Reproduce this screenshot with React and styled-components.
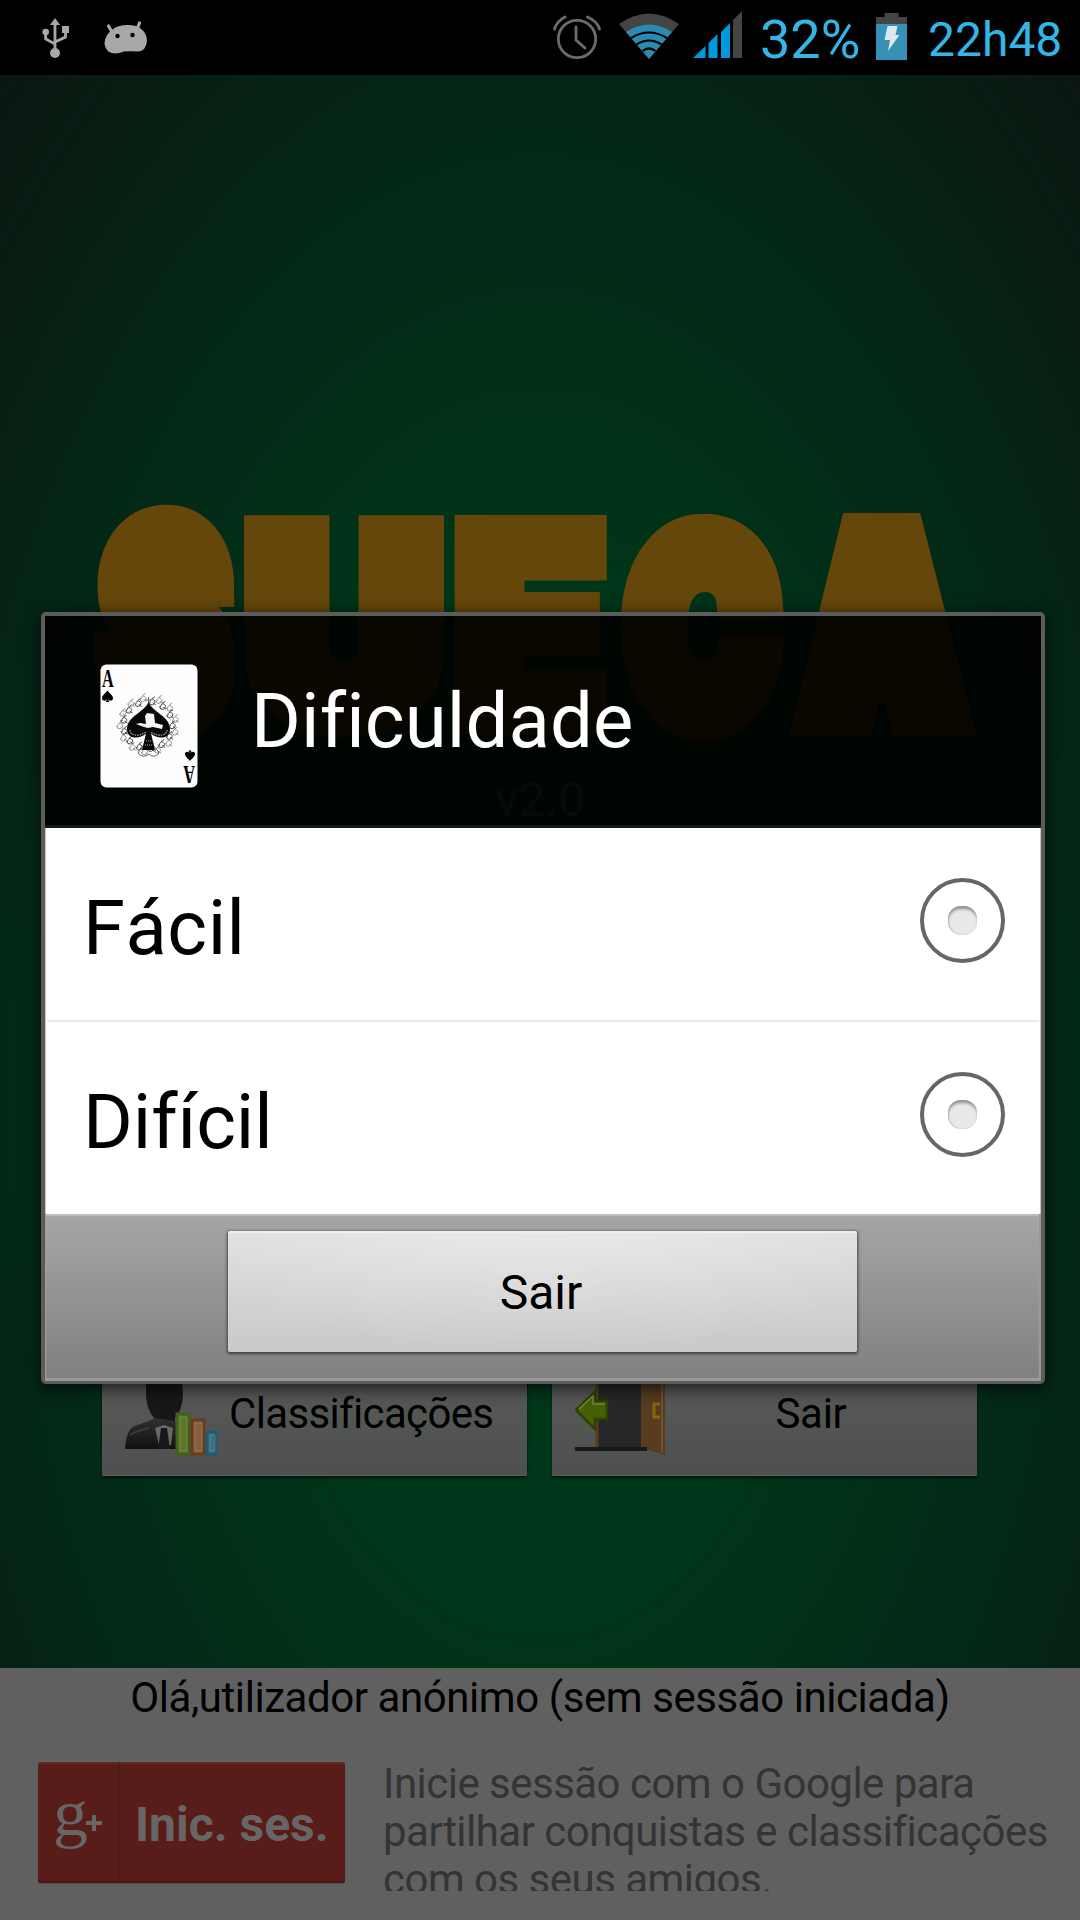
import React from "react";
import styled, { createGlobalStyle } from "styled-components";

const GlobalStyle = createGlobalStyle`
  * { box-sizing: border-box; }
  body { margin: 0; background: #000; font-family: Roboto, "Liberation Sans", sans-serif; }
`;

const Screen = styled.div`
  position: relative;
  width: 1080px;
  height: 1920px;
  display: flex;
  flex-direction: column;
  overflow: hidden;
`;

const StatusBar = styled.header`
  height: 75px;
  flex: none;
  display: flex;
  justify-content: space-between;
  background: #000;
  padding: 0 19px 0 42px;
`;

const StatusGroup = styled.div`
  display: flex;
  align-items: flex-start;
`;

const StatusIcon = styled.svg`
  display: block;
  flex: none;
  margin-left: ${(p) => p.$gap || 0}px;
`;

const StatusText = styled.span`
  width: ${(p) => p.$width}px;
  margin-left: ${(p) => p.$gap}px;
  font-size: ${(p) => p.$size}px;
  line-height: 76px;
  padding-top: ${(p) => p.$drop || 0}px;
  white-space: nowrap;
  color: #33b5e5;
`;

const Table = styled.main`
  height: 1593px;
  flex: none;
  display: flex;
  flex-direction: column;
  align-items: center;
  background: radial-gradient(ellipse 790px 1400px at 540px 1020px, #003a1b 0%, #003619 35%, #042616 72%, #0b1610 100%);
`;

const Logo = styled.svg`
  display: block;
  flex: none;
  margin-top: 405px;
  overflow: visible;
`;

const Version = styled.div`
  height: 60px;
  margin-top: 20px;
  font-size: 48px;
  line-height: 60px;
  color: #5a5a5a;
`;

const Menu = styled.nav`
  width: 876px;
  margin-top: 526px;
  display: grid;
  grid-template-columns: 425px 425px;
  gap: 25px;
`;

const MenuButton = styled.button`
  height: 120px;
  display: flex;
  align-items: center;
  padding: 0 0 9px 23px;
  border: 0;
  border-radius: 2px;
  background: linear-gradient(#5a5c5a, #4e504f);
  box-shadow: 0 2px 3px rgba(0, 0, 0, 0.6), inset 0 -1px 0 #5c5e5d;
  font-family: inherit;
  font-size: 42px;
  line-height: 50px;
  color: #000;
`;

const MenuLabel = styled.span`
  flex: 1;
  padding: 5px ${(p) => p.$right || 0}px 0 ${(p) => p.$left || 0}px;
  text-align: ${(p) => p.$align};
  letter-spacing: ${(p) => p.$track || 0}px;
`;

const Footer = styled.footer`
  flex: 1;
  background: #606060;
`;

const Greeting = styled.div`
  height: 60px;
  line-height: 60px;
  text-align: center;
  font-size: 42px;
  letter-spacing: ${(p) => p.$track}px;
  color: #000;
`;

const SignIn = styled.div`
  display: flex;
  padding: 34px 0 0 38px;
`;

const GoogleButton = styled.button`
  width: 307px;
  height: 121px;
  flex: none;
  display: flex;
  padding: 0;
  border: 0;
  border-radius: 3px;
  background: #581d18;
  box-shadow: inset 0 2px 0 #632a25, inset 0 -2px 0 #4a1814, 0 1px 1px #505050;
  color: #666;
`;

const GoogleMark = styled.span`
  width: 81px;
  border-right: 1px solid #45150f;
`;

const GoogleLabel = styled.span`
  flex: 1;
  padding-left: 16px;
  text-align: left;
  font: bold 48px/125px Roboto, sans-serif;
  white-space: nowrap;
`;

const Pitch = styled.p`
  height: 131px;
  margin: -2px 0 0 38px;
  overflow: hidden;
  font-size: 42px;
  line-height: 48px;
  letter-spacing: ${(p) => p.$track}px;
  white-space: nowrap;
  color: #343434;
`;

const Dialog = styled.section`
  position: absolute;
  left: 41px;
  top: 612px;
  width: 1004px;
  height: 772px;
  display: flex;
  flex-direction: column;
  border: 4px solid #5c5c5c;
  border-width: 4px 4px 3px;
  border-radius: 5px;
  box-shadow: 0 4px 18px rgba(0, 0, 0, 0.75);
`;

const DialogHeader = styled.div`
  height: 212px;
  flex: none;
  display: flex;
  align-items: center;
  padding: 10px 0 0 55px;
  background: rgba(0, 0, 0, 0.9);
  border-bottom: 3px solid #181818;
`;

const Title = styled.h1`
  margin: -10px 0 0 53px;
  font-weight: 400;
  font-size: 76px;
  line-height: 90px;
  letter-spacing: ${(p) => p.$track}px;
  color: #fff;
`;

const Options = styled.div`
  height: 386px;
  flex: none;
  display: flex;
  flex-direction: column;
  background: #fff;
  border: solid #c8c8c8;
  border-width: 0 1px;
`;

const Option = styled.label`
  flex: 1;
  display: flex;
  align-items: center;
  justify-content: space-between;
  padding: 0 35px 0 37px;
`;

const OptionText = styled.span`
  padding-top: 7px;
  font-size: 76px;
  font-kerning: none;
  line-height: 90px;
  letter-spacing: ${(p) => p.$track}px;
  color: #000;
`;

const Divider = styled.hr`
  height: 2px;
  width: 992px;
  margin: 0 0 0 1px;
  border: 0;
  background: #e9e9e9;
`;

const Radio = styled.span`
  width: 85px;
  height: 85px;
  margin-bottom: 8px;
  display: grid;
  place-items: center;
  border: 4px solid #666;
  border-radius: 50%;
`;

const RadioDot = styled.span`
  width: 29px;
  height: 29px;
  border-radius: 13px;
  background: #e9e9e9;
  box-shadow: inset 0 4px 3px -1px #929292, inset 1px 0 2px #bbb;
`;

const Actions = styled.div`
  flex: 1;
  display: flex;
  justify-content: center;
  align-items: flex-start;
  padding: 17px 1px 0 0;
  background: linear-gradient(#a6a6a6, #808080);
  border: solid #999;
  border-width: 0 2px 3px 1px;
  box-shadow: inset 0 2px 1px #bdbdbd;
`;

const ActionButton = styled.button`
  width: 629px;
  height: 121px;
  padding: 3px 2px 0 0;
  border: 0;
  border-radius: 2px;
  background: radial-gradient(ellipse 60% 100% at 50% 0, rgba(255,255,255,0.3), rgba(255,255,255,0)), linear-gradient(#e0e0e0, #c9c9c9);
  box-shadow: inset 0 2px 1px #f0f0f0, 0 1px 3px 1px rgba(40, 40, 40, 0.75);
  font: 48px/58px Roboto, sans-serif;
  color: #000;
`;

function UsbIcon() {
  return (
    <StatusIcon width="28" height="75" viewBox="0 0 28 75" fill="#a8a8a8">
      <path d="M13 18 18 25H8Z" />
      <circle cx="13" cy="53" r="5" />
      <circle cx="3.7" cy="32" r="3.3" />
      <path d="M20 26h7v7h-7z" />
      <path d="M13 24v28M3.7 33v6L13 44M23.5 31v6L13 42" fill="none" stroke="#a8a8a8" strokeWidth="2.8" />
    </StatusIcon>
  );
}

function DroidIcon() {
  return (
    <StatusIcon $gap={34} width="44" height="75" viewBox="0 0 44 75" fill="#a8a8a8">
      <path d="M4.500 26 8 32M35.500 23 33.500 28" stroke="#a8a8a8" strokeWidth="3.200" strokeLinecap="round" />
      <path d="M8 30Q13 25 24 25Q32 25 36 28Q43 33 43 41Q42 51 34 51.500Q27 51 20 51.500Q11 55 5 52Q1 49 0.500 43Q1 35 8 30Z" />
      <circle cx="13.500" cy="36" r="2.200" fill="#000" />
      <circle cx="28.500" cy="35" r="2.200" fill="#000" />
    </StatusIcon>
  );
}

function AlarmIcon() {
  return (
    <StatusIcon width="50" height="75" viewBox="0 0 50 75" fill="none" stroke="#6b6b6b" strokeWidth="2.800" strokeLinecap="round">
      <circle cx="24" cy="39" r="18.700" />
      <path d="M23 27v13l9 8" />
      <path d="M1.500 29Q4 21 12 17M46.500 29Q44 21 34.500 17" />
    </StatusIcon>
  );
}

function WifiIcon() {
  return (
    <StatusIcon $gap={16} width="60" height="75" viewBox="0 0 60 75">
      <path d="M30 59 0 24Q30 3 60 24Z" fill="#444" />
      <path d="M30 59 7 32Q30 17 53 32Z" fill="#2a8ab0" />
      <path d="M12 38Q30 27 48 38M17.500 44.500Q30 36.500 42.500 44.500M23.500 51Q30 46 36.500 51" fill="none" stroke="#000" strokeWidth="2.200" />
    </StatusIcon>
  );
}

function SignalIcon() {
  return (
    <StatusIcon $gap={14} width="49" height="75" viewBox="0 0 49 75" fill="#0099e0">
      <path d="M0 58 12.500 46V58ZM15.500 58V43L24.500 34V58ZM28 58V32L37 23V58Z" />
      <path d="M40 58V20L49 11V58Z" fill="#444" />
    </StatusIcon>
  );
}

function BatteryIcon() {
  return (
    <StatusIcon $gap={13} width="31" height="75" viewBox="0 0 31 75">
      <path d="M8.500 13h14v4H31v7H0v-7h8.500z" fill="#444" />
      <path d="M0 24h31v36H0z" fill="#3790b5" />
      <path d="M11.500 26h10l-2 9h4L12 51l2-11H8.500z" fill="#dbe9ef" />
    </StatusIcon>
  );
}

function Spade({ x, y, s, flip }) {
  return (
    <path
      transform={`translate(${x} ${y}) scale(${s} ${flip ? -s : s})`}
      d="M0-10C2-6 10-2 10 4C10 9 4 10 1 6L3 11H-3L-1 6C-4 10-10 9-10 4C-10-2-2-6 0-10Z"
    />
  );
}

function AceCard() {
  const curls = Array.from({ length: 26 }, (_, i) => {
    const a = ((-80 + (i * 340) / 25) * Math.PI) / 180;
    const r = i % 2 ? 28 : 24.5;
    return [48.5 + Math.cos(a) * r, 61 + Math.sin(a) * r * 0.96];
  });
  return (
    <svg width="98" height="124" viewBox="0 0 98 124">
      <rect x="0.500" y="0.500" width="97" height="123" rx="6" fill="#fdfdfd" />
      <g fontFamily="Liberation Serif, serif" fontWeight="bold" fontSize="26">
        <text transform="translate(2 23) scale(.62 1)">A</text>
        <text transform="translate(95 102) rotate(180) scale(.62 1)">A</text>
      </g>
      <Spade x={7.500} y={32} s={0.550} />
      <Spade x={90} y={92} s={0.500} flip />
      <g fill="none" strokeWidth="0.900">
        {curls.map(([x, y], i) => (
          <path key={i} d={`M${x - 3} ${y + 1}q1-5 4-3t-1 5q-3 1-4-3m3-3l3-2m-2 6l3 2`} stroke={i % 2 ? "#888" : "#333"} />
        ))}
        <path d="M38 89q4-9 10-9t11 9q-5 6-10 1q-6 5-11-1M48.500 33v10M46 36h5" stroke="#555" />
      </g>
      <path d="M48.500 38C52 48 70 52 70 65C70 76 57 75 51 69.500L55 86H42L46 69.500C40 75 27 76 27 65C27 52 45 48 48.500 38Z" fill="#080808" />
      <path d="M30 66c0 6 9 7 16 2M67 66c0 6-9 7-16 2" fill="none" stroke="#aaa" strokeWidth="1.200" strokeDasharray="1.500 1" />
      <path d="M45 52l2 -3 7 1 1 9 8 2-1 4-9-2-5 1-4-1-8-3 4-1 6 1z" fill="#f4f4f4" />
      <path d="M45 81h7M46 77h5" stroke="#aaa" strokeDasharray="1 1" />
    </svg>
  );
}

function RankingIcon() {
  return (
    <svg width="94" height="92" viewBox="0 0 94 92">
      <defs>
        <linearGradient id="suit" x2="0" y2="1">
          <stop offset="0" stopColor="#303030" />
          <stop offset="1" stopColor="#111" />
        </linearGradient>
      </defs>
      <path d="M21 8Q39-8 57 8L58 30Q57 44 50 52V66H29V52Q22 44 21 30Z" fill="#171717" />
      <path d="M0 83Q1 63 10 60L31 52L49 55L62 62V83Z" fill="url(#suit)" />
      <path d="M5 69Q11 65 24 62" stroke="#3b3b3b" strokeWidth="2" fill="none" />
      <path d="M30 62 39 59 48 62 46 79H34Z" fill="#686868" />
      <path d="M36 62h6l3 21H33z" fill="#181818" />
      <g strokeWidth="3">
        <path d="M52 48h12v40H52z" fill="#5a7826" stroke="#44611b" />
        <path d="M67 54h12v34H67z" fill="#8a5e38" stroke="#673d1a" />
        <path d="M82 66h9v22h-9z" fill="#397086" stroke="#245970" />
      </g>
      <path d="M55 51h7v34h-7zM70 57h7v28h-7zM85 69h5v16h-5z" fill="none" stroke="#aaa" strokeOpacity=".3" />
    </svg>
  );
}

function ExitIcon() {
  return (
    <svg width="92" height="92" viewBox="0 0 92 92">
      <path d="M22 0h44v83H22z" fill="#262728" />
      <path d="M22 0v83" stroke="#5c3c20" strokeWidth="3" />
      <path d="M66 0h24v89L66 82z" fill="#573c20" />
      <path d="M87 0v87" stroke="#75502f" strokeWidth="2" />
      <path d="M85 38h-6v13h6" fill="none" stroke="#8a6210" strokeWidth="3" />
      <path d="M0 83h72" stroke="#191919" strokeWidth="4" />
      <path d="M1 44 20 26v9h12v18H20v10Z" fill="#466006" stroke="#294400" strokeWidth="2.500" />
      <path d="M4 43 18 30v8h12" fill="none" stroke="#768a45" strokeWidth="1.500" />
    </svg>
  );
}

const LOGO_LETTERS = [
  { char: "S", x: 103, y: 718, width: 124, size: 262, stroke: 40 },
  { char: "U", x: 248, y: 719, width: 192, size: 258, stroke: 32 },
  { char: "E", x: 453, y: 724, width: 154, size: 272, stroke: 22 },
  { char: "C", x: 627, y: 721, width: 149, size: 258, stroke: 34 },
  { char: "A", x: 814, y: 707, width: 137, size: 228, stroke: 56 },
];

export default function App() {
  return (
    <Screen>
      <GlobalStyle />
      <StatusBar>
        <StatusGroup>
          <UsbIcon />
          <DroidIcon />
        </StatusGroup>
        <StatusGroup>
          <AlarmIcon />
          <WifiIcon />
          <SignalIcon />
          <StatusText $size={54} $gap={18} $width={103} $drop={2}>32%</StatusText>
          <BatteryIcon />
          <StatusText $size={48} $gap={21} $width={133} $drop={2}>22h48</StatusText>
        </StatusGroup>
      </StatusBar>

      <Table>
        <Logo width="900" height="270" viewBox="90 480 900 270">
          <text fontFamily="Inter, sans-serif" fontWeight="900" fill="#66470b" stroke="#66470b">
            {LOGO_LETTERS.map(({ char, x, y, width, size, stroke }) => (
              <tspan
                key={char}
                x={x}
                y={y}
                fontSize={size}
                strokeWidth={stroke}
                textLength={width}
                lengthAdjust="spacingAndGlyphs"
              >
                {char}
              </tspan>
            ))}
          </text>
        </Logo>
        <Version>v2.0</Version>
        <Menu>
          <MenuButton>
            <RankingIcon />
            <MenuLabel $align="left" $left={10} $track={-0.65}>Classificações</MenuLabel>
          </MenuButton>
          <MenuButton>
            <ExitIcon />
            <MenuLabel $align="center" $right={22} $track={-0.3}>Sair</MenuLabel>
          </MenuButton>
        </Menu>
      </Table>

      <Footer>
        <Greeting $track={-0.43}>Olá,utilizador anónimo (sem sessão iniciada)</Greeting>
        <SignIn>
          <GoogleButton>
            <GoogleMark>
              <svg width="80" height="121" viewBox="0 0 80 121" fill="#666">
                <text transform="translate(15 73) scale(1.06 1)" fontFamily="Liberation Serif, serif" fontSize="66">g</text>
                <path d="M48 61h16M56 53v16" stroke="#666" strokeWidth="4" />
              </svg>
            </GoogleMark>
            <GoogleLabel>Inic. ses.</GoogleLabel>
          </GoogleButton>
          <Pitch $track={-0.52}>
            Inicie sessão com o Google para
            <br />
            partilhar conquistas e classificações
            <br />
            com os seus amigos.
          </Pitch>
        </SignIn>
      </Footer>

      <Dialog>
        <DialogHeader>
          <AceCard />
          <Title $track={0.15}>Dificuldade</Title>
        </DialogHeader>
        <Options>
          <Option>
            <OptionText $track={0.5}>Fácil</OptionText>
            <Radio><RadioDot /></Radio>
          </Option>
          <Divider />
          <Option>
            <OptionText $track={-0.1}>Difícil</OptionText>
            <Radio><RadioDot /></Radio>
          </Option>
        </Options>
        <Actions>
          <ActionButton>Sair</ActionButton>
        </Actions>
      </Dialog>
    </Screen>
  );
}
